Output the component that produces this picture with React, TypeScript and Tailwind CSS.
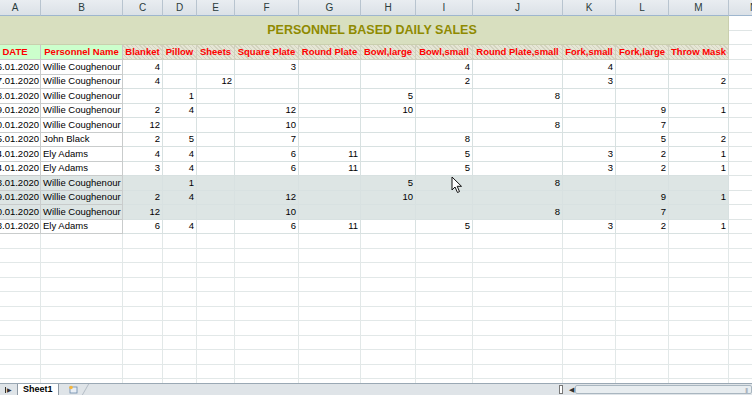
import React from "react"

const letters = ["A", "B", "C", "D", "E", "F", "G", "H", "I", "J", "K", "L", "M", "N"]
const heads = ["Blanket", "Pillow", "Sheets", "Square Plate", "Round Plate", "Bowl,large", "Bowl,small", "Round Plate,small", "Fork,small", "Fork,large", "Throw Mask"]

type Row = { date: string; name: string; v: (number | null)[]; sel?: boolean }

const _ = null
const rows: Row[] = [
  { date: "16.01.2020", name: "Willie Coughenour", v: [4, _, _, 3, _, _, 4, _, 4, _, _] },
  { date: "17.01.2020", name: "Willie Coughenour", v: [4, _, 12, _, _, _, 2, _, 3, _, 2] },
  { date: "18.01.2020", name: "Willie Coughenour", v: [_, 1, _, _, _, 5, _, 8, _, _, _] },
  { date: "19.01.2020", name: "Willie Coughenour", v: [2, 4, _, 12, _, 10, _, _, _, 9, 1] },
  { date: "20.01.2020", name: "Willie Coughenour", v: [12, _, _, 10, _, _, _, 8, _, 7, _] },
  { date: "15.01.2020", name: "John Black", v: [2, 5, _, 7, _, _, 8, _, _, 5, 2] },
  { date: "14.01.2020", name: "Ely Adams", v: [4, 4, _, 6, 11, _, 5, _, 3, 2, 1] },
  { date: "24.01.2020", name: "Ely Adams", v: [3, 4, _, 6, 11, _, 5, _, 3, 2, 1] },
  { date: "18.01.2020", name: "Willie Coughenour", v: [_, 1, _, _, _, 5, _, 8, _, _, _], sel: true },
  { date: "19.01.2020", name: "Willie Coughenour", v: [2, 4, _, 12, _, 10, _, _, _, 9, 1], sel: true },
  { date: "20.01.2020", name: "Willie Coughenour", v: [12, _, _, 10, _, _, _, 8, _, 7, _], sel: true },
  { date: "28.01.2020", name: "Ely Adams", v: [6, 4, _, 6, 11, _, 5, _, 3, 2, 1] },
]

const grid =
  "grid grid-cols-[51px_82px_40px_34px_38px_64px_62px_55px_57px_90px_53px_53px_60px_50px]"

const hatch =
  "bg-[repeating-linear-gradient(45deg,#d3d3bf_0px,#d3d3bf_1px,#e6e6d6_1px,#e6e6d6_3px)]"

function Cursor() {
  return (
    <svg className="absolute left-[451px] top-[176px]" width="13" height="18" viewBox="0 0 13 18">
      <path d="M1 1 L1 14 L4 11 L6.5 16.5 L8.5 15.6 L6.2 10.3 L10.5 10.3 Z" fill="#fff" stroke="#111" strokeWidth="1" strokeLinejoin="round" />
    </svg>
  )
}

export default function App() {
  return (
    <div className="w-[752px] h-[395px] overflow-hidden bg-white font-['Liberation_Sans',Arial,sans-serif] text-[9.5px] text-black relative">
      <div className="h-[383px] overflow-hidden">
        <div className={`${grid} -ml-[10px] w-max`}>
          {/* column letters */}
          {letters.map((l) => (
            <div
              key={l}
              className="h-[16px] flex items-center justify-center bg-[linear-gradient(#e9edf1,#dbe1e7)] border-r border-b border-r-[#b8c4cf] border-b-[#9eb6ce] text-[10px] text-[#2a3c3c]"
            >
              {l}
            </div>
          ))}

          {/* title */}
          <div className="col-span-13 row-span-2 h-[29px] flex items-center justify-center pl-[26px] bg-[#d8dfbf] border-r border-b border-[#c9cfae] text-[12.5px] font-bold text-[#8f8a00]">
            PERSONNEL BASED DAILY SALES
          </div>
          <div className="h-[15px] border-b border-[#dfe5e5]" />
          <div className="h-[14px] border-b border-[#dfe5e5]" />

          {/* header row */}
          <div className="h-[15px] flex items-center justify-center bg-[#ccffcc] border-r border-b border-[#c8c8c8] font-bold text-[#ff0000]">
            DATE
          </div>
          <div className="h-[15px] flex items-center justify-center bg-[#ccffcc] border-r border-b border-[#c8c8c8] font-bold text-[#ff0000] whitespace-nowrap">
            Personnel Name
          </div>
          {heads.map((h) => (
            <div
              key={h}
              className={`h-[15px] flex items-center justify-center ${hatch} border-r border-b border-[#cfcfbf] font-bold text-[#ff0000] whitespace-nowrap`}
            >
              {h}
            </div>
          ))}
          <div className="h-[15px] border-b border-[#dfe5e5]" />

          {/* data rows */}
          {rows.map((r, i) => {
            const bg = r.sel ? "bg-[#dde5e4]" : "bg-white"
            return (
              <React.Fragment key={i}>
                <div className={`h-[14.5px] flex items-center justify-end pr-[1px] ${bg} border-r border-b border-[#c9cccc]`}>
                  {r.date}
                </div>
                <div className={`h-[14.5px] flex items-center pl-[2px] whitespace-nowrap ${bg} border-r border-b border-[#c9cccc]`}>
                  {r.name}
                </div>
                {r.v.map((n, j) => (
                  <div
                    key={j}
                    className={`h-[14.5px] flex items-center justify-end pr-[2px] ${bg} border-r border-b border-[#d8e1e1]`}
                  >
                    {n ?? ""}
                  </div>
                ))}
                <div className="h-[14.5px] border-b border-[#dfe5e5]" />
              </React.Fragment>
            )
          })}

          {/* empty rows */}
          {Array.from({ length: 11 }).map((_, i) =>
            letters.map((l) => (
              <div key={`${i}-${l}`} className="h-[14.5px] border-r border-b border-[#e2e8e8]" />
            ))
          )}
        </div>
      </div>

      {/* sheet tab bar */}
      <div className="h-[12px] flex items-stretch bg-[#dfe4e8] border-t border-[#9aa8b4] text-[9px]">
        <div className="w-[17px] flex items-center justify-center gap-[1px] text-[#333]">
          <span className="inline-block w-[1px] h-[6px] bg-[#333]" />
          <span className="text-[6px] leading-none">▶</span>
        </div>
        <div className="flex items-center px-[5px] bg-white border-x border-[#8f9aa5] font-bold leading-none text-black">
          Sheet1
        </div>
        <div className="w-[24px] flex items-center justify-center border-r border-[#b3bcc5] skew-x-[-30deg] ml-[3px]">
          <svg width="11" height="9" viewBox="0 0 11 9" className="skew-x-[30deg]">
            <rect x="2" y="2" width="7" height="6" fill="#e8eef5" stroke="#6a87a8" strokeWidth="0.8" />
            <circle cx="3" cy="2.5" r="1.8" fill="#f5b63c" />
          </svg>
        </div>
        <div className="flex-1" />
        <div className="w-[4px] my-[1px] mr-[4px] bg-white border border-[#777]" />
        <div className="w-[8px] flex items-center justify-center text-[7px] text-[#333] leading-none">◀</div>
        <div className="w-[177px] my-[1px] flex items-center justify-end pr-[4px] bg-[#e8edf0] border border-[#a9b6c0] rounded-[2px]">
          <span className="text-[6px] leading-none text-[#8a98a5] tracking-[-1px]">|||</span>
        </div>
      </div>

      <Cursor />
    </div>
  )
}
